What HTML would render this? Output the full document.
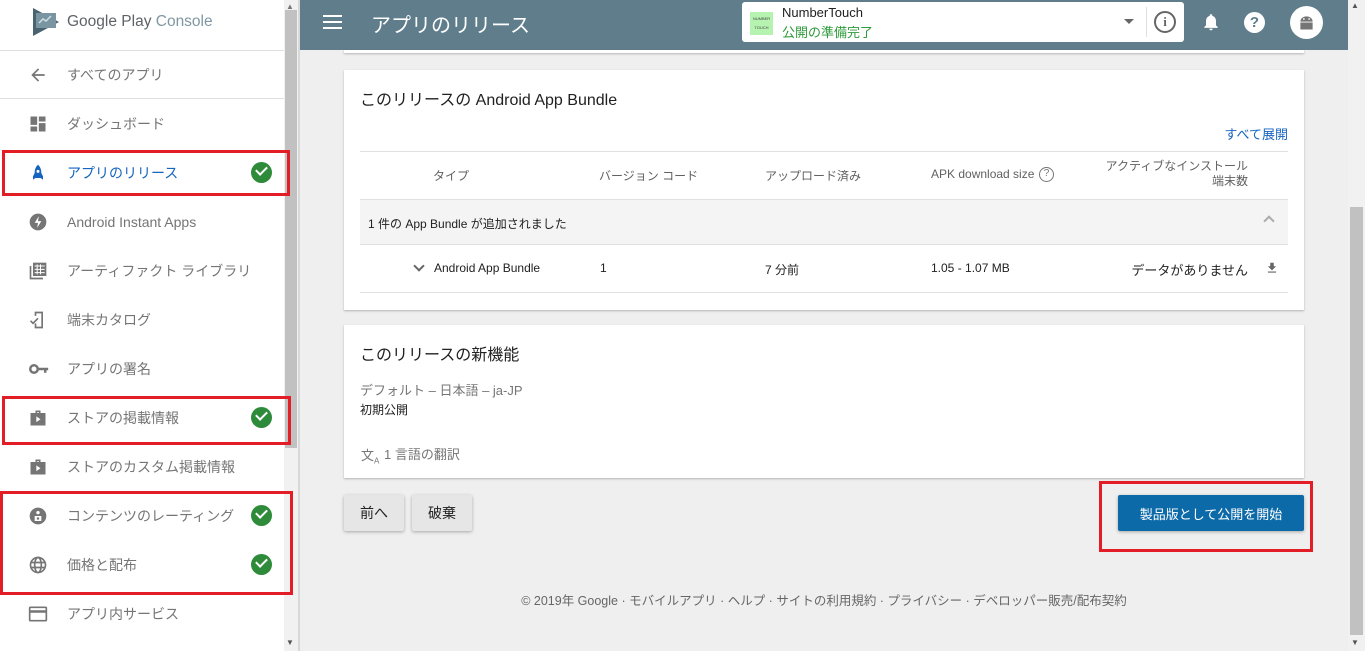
<!DOCTYPE html>
<html><head><meta charset="utf-8"><style>
*{box-sizing:border-box;margin:0;padding:0}
body{width:1365px;height:651px;overflow:hidden;position:relative;font-family:"Liberation Sans","Noto Sans CJK JP",sans-serif;background:#efefef;color:#212121}
.abs{position:absolute}
#side{left:0;top:0;width:284px;height:651px;background:#fff}
.item{position:absolute;left:0;width:284px;height:49px;display:flex;align-items:center;font-size:14px;color:#757575}
.item svg{position:absolute;left:28px}
.item span{position:absolute;left:67px}
.chk{position:absolute;left:251px;width:21px;height:21px;border-radius:50%;background:#2e8b3a}
.chk:after{content:"";position:absolute;left:5px;top:4px;width:9px;height:5px;border-left:2.5px solid #fff;border-bottom:2.5px solid #fff;transform:rotate(-45deg)}
.red{position:absolute;border:3px solid #e21d25}
.card{position:absolute;left:344px;width:960px;background:#fff;box-shadow:0 1px 2px rgba(0,0,0,.25)}
.th{position:absolute;font-size:12px;color:#616161}
.td{position:absolute;font-size:12px;color:#212121}
.btn{position:absolute;height:36px;top:495px;background:#e6e6e6;box-shadow:0 1px 3px rgba(0,0,0,.3);border-radius:2px;font-size:14px;display:flex;align-items:center;justify-content:center}
</style></head><body>
<div id="side" class="abs">
  <svg class="abs" style="left:32px;top:7px" width="28" height="30" viewBox="0 0 28 30"><path d="M1 1 L1 29 L27 15 Z" fill="#4a6370"/><rect x="4" y="6" width="20" height="15" fill="#7a95a2"/><path d="M7 16 L11 12 L14 14 L19 9" stroke="#cfdde4" stroke-width="1.5" fill="none"/></svg>
  <div class="abs" style="left:67px;top:13px;font-size:15.5px;color:#5f6368">Google Play <span style="color:#7f97a3">Console</span></div>
  <div class="abs" style="left:0;top:50px;width:284px;height:1px;background:#e0e0e0"></div>
  <div class="abs" style="left:0;top:98px;width:284px;height:1px;background:#e0e0e0"></div>
  <div class="item" style="top:50px"><svg width="20" height="20" viewBox="0 0 24 24"><path d="M20 11H7.8l5.6-5.6L12 4l-8 8 8 8 1.4-1.4L7.8 13H20z" fill="#757575"/></svg><span>すべてのアプリ</span></div>
  <div class="item" style="top:99px"><svg width="20" height="20" viewBox="0 0 24 24"><path d="M3 13h8V3H3zm0 8h8v-6H3zm10 0h8V11h-8zm0-18v6h8V3z" fill="#757575"/></svg><span>ダッシュボード</span></div>
  <div class="item" style="top:148px"><svg width="20" height="20" viewBox="0 0 24 24"><path d="M12 2c3 3 4 6 4 10l2 4v4l-3-2h-6l-3 2v-4l2-4c0-4 1-7 4-10z" fill="#1565c0"/><circle cx="12" cy="10" r="1.8" fill="#fff"/></svg><span style="color:#1565c0">アプリのリリース</span><div class="chk"></div></div>
  <div class="item" style="top:197px"><svg width="20" height="20" viewBox="0 0 24 24"><circle cx="12" cy="12" r="10" fill="#757575"/><path d="M13 5l-5 8h4l-1 6 5-8h-4z" fill="#fff"/></svg><span>Android Instant Apps</span></div>
  <div class="item" style="top:246px"><svg width="20" height="20" viewBox="0 0 24 24"><path d="M2 6v16h16v-2H4V6z" fill="#757575"/><rect x="6" y="2" width="16" height="16" fill="#757575"/><path d="M8 6h12M8 10h12M8 14h12M11 4v12M15 4v12" stroke="#fff" stroke-width="1.2"/></svg><span>アーティファクト ライブラリ</span></div>
  <div class="item" style="top:295px"><svg width="20" height="20" viewBox="0 0 24 24"><path d="M8 2h10v20H8v-6h2v4h6V4h-6v3H8z" fill="#757575"/><path d="M3 13l3 3 6-6" stroke="#757575" stroke-width="2" fill="none"/></svg><span>端末カタログ</span></div>
  <div class="item" style="top:344px"><svg width="22" height="20" viewBox="0 0 24 24"><circle cx="6" cy="12" r="4.5" fill="none" stroke="#757575" stroke-width="3"/><path d="M10 10.5h13v3h-2v3h-3v-3h-8z" fill="#757575"/></svg><span>アプリの署名</span></div>
  <div class="item" style="top:393px"><svg width="20" height="20" viewBox="0 0 24 24"><path d="M9 3h6v3h6v15H3V6h6zm2 2v1h2V5z" fill="#757575"/><path d="M10 10l5 3.5-5 3.5z" fill="#fff"/></svg><span>ストアの掲載情報</span><div class="chk"></div></div>
  <div class="item" style="top:442px"><svg width="20" height="20" viewBox="0 0 24 24"><path d="M9 3h6v3h6v15H3V6h6zm2 2v1h2V5z" fill="#757575"/><path d="M10 10l5 3.5-5 3.5z" fill="#fff"/></svg><span>ストアのカスタム掲載情報</span></div>
  <div class="item" style="top:491px"><svg width="20" height="20" viewBox="0 0 24 24"><circle cx="12" cy="12" r="10" fill="#757575"/><circle cx="12" cy="8" r="2" fill="#fff"/><path d="M8 12h8v6H8z" fill="#fff"/><circle cx="12" cy="15" r="1.5" fill="#757575"/></svg><span>コンテンツのレーティング</span><div class="chk"></div></div>
  <div class="item" style="top:540px"><svg width="20" height="20" viewBox="0 0 24 24"><circle cx="12" cy="12" r="9" fill="none" stroke="#757575" stroke-width="2"/><ellipse cx="12" cy="12" rx="4" ry="9" fill="none" stroke="#757575" stroke-width="2"/><path d="M3 9h18M3 15h18" stroke="#757575" stroke-width="2"/></svg><span>価格と配布</span><div class="chk"></div></div>
  <div class="item" style="top:589px"><svg width="20" height="20" viewBox="0 0 24 24"><rect x="2" y="4" width="20" height="16" rx="1" fill="none" stroke="#757575" stroke-width="2"/><path d="M2 9h20" stroke="#757575" stroke-width="3"/></svg><span>アプリ内サービス</span></div>
</div>
<div class="abs" style="left:284px;top:0;width:15px;height:651px;background:#f1f1f1"></div>
<div class="abs" style="left:285px;top:10px;width:12px;height:438px;background:#c1c1c1"></div>
<div class="abs" style="left:286px;top:2px;font-size:8px;color:#777">▲</div>
<div class="abs" style="left:286px;top:638px;font-size:8px;color:#555">▼</div>
<div class="abs" style="left:298px;top:0;width:2px;height:651px;background:#d8d8d8"></div>
<div class="red" style="left:2px;top:150px;width:288px;height:46px"></div>
<div class="red" style="left:2px;top:396px;width:289px;height:49px"></div>
<div class="red" style="left:0;top:491px;width:293px;height:104px"></div>
<!-- header -->
<div class="abs" style="left:300px;top:0;width:1048px;height:50px;background:#607d8b"></div>
<div class="abs" style="left:323px;top:15px;width:19px;height:2px;background:#fff;box-shadow:0 6px 0 #fff,0 12px 0 #fff"></div>
<div class="abs" style="left:371px;top:9px;font-size:20px;color:#fff">アプリのリリース</div>
<div class="abs" style="left:742px;top:2px;width:442px;height:40px;background:#fff;border-radius:3px"></div>
<div class="abs" style="left:750px;top:12px;width:23px;height:23px;background:#b6f2b0;font-size:4px;color:#444;text-align:center;line-height:9px;padding-top:2px">NUMBER<br>TOUCH</div>
<div class="abs" style="left:782px;top:5px;font-size:13px;color:#212121">NumberTouch</div>
<div class="abs" style="left:782px;top:22px;font-size:13px;color:#2e9a3a">公開の準備完了</div>
<div class="abs" style="left:1124px;top:19px;border-left:5px solid transparent;border-right:5px solid transparent;border-top:5px solid #666"></div>
<div class="abs" style="left:1146px;top:7px;width:1px;height:30px;background:#e0e0e0"></div>
<div class="abs" style="left:1154px;top:11px;width:22px;height:22px;border:2px solid #666;border-radius:50%;font:bold 13px 'Liberation Serif',serif;color:#666;text-align:center;line-height:18px">i</div>
<svg class="abs" style="left:1201px;top:11px" width="20" height="22" viewBox="0 0 24 24"><path d="M12 22a2 2 0 002-2h-4a2 2 0 002 2zm6-6V11c0-3-1.6-5.6-4.5-6.3V4a1.5 1.5 0 00-3 0v.7C7.6 5.4 6 8 6 11v5l-2 2v1h16v-1z" fill="#fff"/></svg>
<div class="abs" style="left:1244px;top:12px;width:21px;height:21px;border-radius:50%;background:#fff;color:#607d8b;font:bold 15px 'Liberation Sans';text-align:center;line-height:21px">?</div>
<div class="abs" style="left:1290px;top:6px;width:33px;height:33px;border-radius:50%;background:#fff"></div>
<svg class="abs" style="left:1296px;top:12px" width="21" height="21" viewBox="0 0 24 24"><path d="M5 11a7 6 0 0114 0z" fill="#757575"/><rect x="5" y="12" width="14" height="8" fill="#757575"/><circle cx="9" cy="8" r="1" fill="#fff"/><circle cx="15" cy="8" r="1" fill="#fff"/></svg>
<!-- main scrollbar -->
<div class="abs" style="left:1348px;top:0;width:17px;height:651px;background:#f1f1f1"></div>
<div class="abs" style="left:1350px;top:207px;width:13px;height:428px;background:#c1c1c1"></div>
<div class="abs" style="left:1351px;top:1px;font-size:8px;color:#555">▲</div>
<div class="abs" style="left:1351px;top:638px;font-size:8px;color:#555">▼</div>
<div class="card" style="top:50px;height:3px"></div>
<div class="card" style="top:70px;height:240px">
  <div class="abs" style="left:16px;top:16px;font-size:16px">このリリースの Android App Bundle</div>
  <div class="abs" style="right:16px;top:54px;font-size:13px;color:#1565c0">すべて展開</div>
  <div class="abs" style="left:16px;top:81px;width:928px;height:1px;background:#e0e0e0"></div>
  <div class="th" style="left:89px;top:97px">タイプ</div>
  <div class="th" style="left:255px;top:97px">バージョン コード</div>
  <div class="th" style="left:421px;top:97px">アップロード済み</div>
  <div class="th" style="left:587px;top:97px">APK download size</div>
  <div class="abs" style="left:695px;top:97px;width:15px;height:15px;border:1.5px solid #757575;border-radius:50%;font-size:10px;color:#757575;text-align:center;line-height:12px">?</div>
  <div class="th" style="left:740px;top:89px;width:164px;text-align:right;line-height:15px">アクティブなインストール<br>端末数</div>
  <div class="abs" style="left:16px;top:129px;width:928px;height:46px;background:#f4f4f4;border-top:1px solid #e0e0e0;border-bottom:1px solid #e0e0e0"></div>
  <div class="td" style="left:24px;top:145px">1 件の App Bundle が追加されました</div>
  <div class="abs" style="left:921px;top:147px;width:8px;height:8px;border-left:2px solid #aaa;border-top:2px solid #aaa;transform:rotate(45deg)"></div>
  <div class="abs" style="left:71px;top:192px;width:8px;height:8px;border-right:2px solid #666;border-bottom:2px solid #666;transform:rotate(45deg)"></div>
  <div class="td" style="left:90px;top:191px">Android App Bundle</div>
  <div class="td" style="left:256px;top:191px">1</div>
  <div class="td" style="left:421px;top:191px">7 分前</div>
  <div class="td" style="left:587px;top:191px">1.05 - 1.07 MB</div>
  <div class="td" style="left:740px;top:190px;width:164px;text-align:right;font-size:13px">データがありません</div>
  <svg class="abs" style="left:921px;top:191px" width="14" height="14" viewBox="0 0 24 24"><path d="M19 9h-4V3H9v6H5l7 7zM5 18v2h14v-2z" fill="#666"/></svg>
  <div class="abs" style="left:16px;top:222px;width:928px;height:1px;background:#e0e0e0"></div>
</div>
<div class="card" style="top:325px;height:153px">
  <div class="abs" style="left:16px;top:16px;font-size:16px">このリリースの新機能</div>
  <div class="abs" style="left:16px;top:55px;font-size:13px;color:#757575">デフォルト – 日本語 – ja-JP</div>
  <div class="abs" style="left:16px;top:76px;font-size:12px">初期公開</div>
  <div class="abs" style="left:17px;top:120px;font-size:13px;color:#757575">文<sub style="font-size:8px">A</sub></div>
  <div class="abs" style="left:40px;top:119px;font-size:13px;color:#757575">1 言語の翻訳</div>
</div>
<div class="btn" style="left:344px;width:60px">前へ</div>
<div class="btn" style="left:412px;width:60px">破棄</div>
<div class="btn" style="left:1118px;width:186px;background:#0d6aa8;color:#fff;font-size:13px">製品版として公開を開始</div>
<div class="red" style="left:1099px;top:481px;width:214px;height:71px"></div>
<div class="abs" style="left:300px;top:590px;width:1048px;text-align:center;font-size:12.5px;color:#666">© 2019年 Google · モバイルアプリ · ヘルプ · サイトの利用規約 · プライバシー · デベロッパー販売/配布契約</div>
</body></html>
